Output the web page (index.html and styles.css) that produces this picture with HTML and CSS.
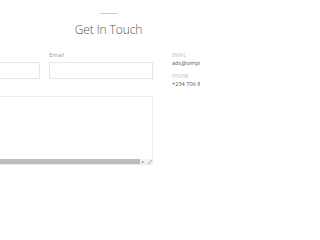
FILE: index.html
```html
<!DOCTYPE html>
<html>
<head>
<meta charset="utf-8">
<link rel="stylesheet" href="styles.css">
</head>
<body>
<section class="contact">
  <div class="heading">
    <span class="rule"></span>
    <h2 class="title">Get In Touch</h2>
  </div>
  <div class="body">
    <form class="form">
      <div class="row">
        <label class="field">
          <span class="label">Name</span>
          <input class="input" type="text">
        </label>
        <label class="field">
          <span class="label">Email</span>
          <input class="input" type="text">
        </label>
      </div>
      <div class="area">
        <textarea class="textarea"></textarea>
        <div class="hbar">
          <span class="thumb"></span>
          <span class="arrow">&#9656;</span>
          <span class="corner"></span>
        </div>
      </div>
    </form>
    <aside class="info">
      <div class="item">
        <span class="ilabel">EMAIL</span>
        <span class="ivalue">ads@simplesite.com</span>
      </div>
      <div class="item">
        <span class="ilabel">PHONE</span>
        <span class="ivalue">+234 706 800 0000</span>
      </div>
    </aside>
  </div>
</section>
</body>
</html>
```
FILE: styles.css
```css
html, body {
  margin: 0;
  padding: 0;
  background: #ffffff;
  overflow: hidden;
}
body {
  font-family: "Open Sans", "Liberation Sans", sans-serif;
  width: 200px;
  height: 200px;
}
.contact {
  width: 340px;
  margin-left: -64px;
  padding-top: 13px;
}
.heading {
  display: flex;
  flex-direction: column;
  align-items: center;
  width: 345px;
}
.rule {
  display: block;
  width: 17px;
  height: 1px;
  background: #b9cce8;
}
.title {
  margin: 8px 0 0 0;
  font-size: 12px;
  line-height: 15px;
  font-weight: 300;
  color: #555;
  letter-spacing: -0.1px;
}
.body {
  display: flex;
  gap: 19px;
  margin-top: 14px;
}
.form {
  width: 217px;
  display: flex;
  flex-direction: column;
  gap: 17px;
}
.row {
  display: flex;
  gap: 9px;
}
.field {
  display: flex;
  flex-direction: column;
  gap: 3px;
  width: 104px;
}
.label {
  font-size: 6px;
  line-height: 8px;
  color: #999;
}
.input {
  box-sizing: border-box;
  height: 17px;
  width: 104px;
  margin: 0;
  border: 1px solid #e6e6e6;
  background: #fff;
  outline: none;
}
.area {
  width: 217px;
  border: 1px solid #ececec;
  box-sizing: border-box;
  display: flex;
  flex-direction: column;
}
.textarea {
  display: block;
  height: 62px;
  border: none;
  margin: 0;
  padding: 0;
  resize: none;
  outline: none;
  background: #fff;
}
.hbar {
  display: flex;
  height: 5px;
  background: #f1f1f1;
}
.thumb {
  flex: 1;
  background: #bdbdbd;
}
.arrow {
  width: 6px;
  font-size: 4px;
  line-height: 5px;
  color: #777;
  text-align: center;
}
.corner {
  width: 6px;
  background: linear-gradient(135deg, #f1f1f1 55%, #aaa 56%, #aaa 64%, #f1f1f1 65%);
}
.info {
  display: flex;
  flex-direction: column;
  gap: 6px;
  padding-top: 1px;
  white-space: nowrap;
}
.item {
  display: flex;
  flex-direction: column;
  gap: 1px;
}
.ilabel {
  font-size: 4.5px;
  line-height: 6px;
  letter-spacing: 0.3px;
  color: #bbb;
}
.ivalue {
  font-size: 5.6px;
  line-height: 8px;
  color: #555;
}
```
